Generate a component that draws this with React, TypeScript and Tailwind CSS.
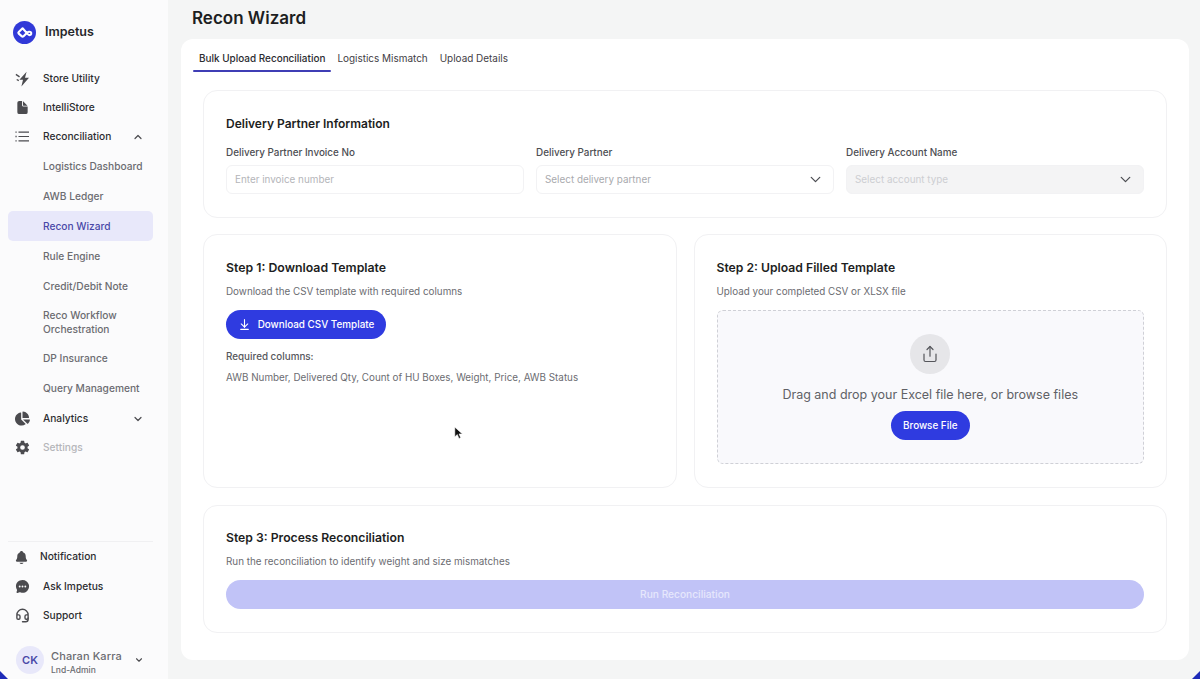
import { ArrowDownToLine, ChevronDown, ChevronUp, Headset, Share } from "lucide-react";
import { FaChartPie } from "react-icons/fa";
import { IoChatbubbleEllipses, IoDocument, IoNotifications, IoSettingsSharp } from "react-icons/io5";
import { ReactNode } from "react";

const subItems = [
  { label: "Logistics Dashboard", h: "h-[30px]" },
  { label: "AWB Ledger", h: "h-[30px]" },
  { label: "Recon Wizard", h: "h-[30px]", active: true },
  { label: "Rule Engine", h: "h-[30px]" },
  { label: "Credit/Debit Note", h: "h-[30px]" },
  { label: "Reco Workflow Orchestration", h: "h-[42px]" },
  { label: "DP Insurance", h: "h-[30px]" },
  { label: "Query Management", h: "h-[30px]" },
];

const Bolt = () => (
  <svg viewBox="0 0 20 20" className="w-[16px] h-[16px]" fill="#4b4b4f">
    <path d="M14.5 1 5.5 11h4.5L8 19.5 17.5 8.5h-5L14.5 1z" />
    <path d="M1.5 3.5l4.7 3-1 1.5-4.5-3zM2.5 10l2.6 1.4-.8 1.3-2.5-1.5z" />
  </svg>
);

const ListIcon = () => (
  <svg viewBox="0 0 16 14" className="w-[14px] h-[13px]" stroke="#4b4b4f" strokeWidth="1.2" fill="none">
    <path d="M4 2h12M4 7h12M4 12h12" />
    <path d="M.5 2h1.4M.5 7h1.4M.5 12h1.4" strokeWidth="1.6" />
  </svg>
);

const Logo = () => (
  <svg viewBox="0 0 24 24" className="w-[23px] h-[23px] shrink-0">
    <circle cx="12" cy="12" r="12" fill="#3139d8" />
    <path
      d="M10 7.6 6 11.4c-.6.6-.6 1.2 0 1.8l3 2.6c.7.6 1.4.6 2 0l3.6-3.6c1-1 3-1.4 4-.4.9 1 .4 2.6-.9 2.9-1 .2-1.7-.4-2.3-1L10 7.6z"
      fill="none"
      stroke="white"
      strokeWidth="2.2"
      strokeLinecap="round"
      strokeLinejoin="round"
    />
  </svg>
);

function NavItem({ icon, label, right, muted }: { icon: ReactNode; label: string; right?: ReactNode; muted?: boolean }) {
  return (
    <div className="flex items-center h-[29px] pl-[15px] pr-[24px]">
      <span className="w-[28px] flex items-center text-[#4b4b4f]">{icon}</span>
      <span className={`flex-1 text-[10.2px] font-medium ${muted ? "text-[#b5b6ba]" : "text-[#2b2c30]"}`}>{label}</span>
      {right}
    </div>
  );
}

function Label({ children }: { children: ReactNode }) {
  return <div className="text-[9.9px] font-medium text-[#4d4e53] mb-[6px] leading-[14px]">{children}</div>;
}

function Card({ children, className }: { children: ReactNode; className?: string }) {
  return <div className={`bg-white border border-[#f1f1f3] rounded-[14px] px-[22px] ${className ?? ""}`}>{children}</div>;
}

function Select({ placeholder, disabled }: { placeholder: string; disabled?: boolean }) {
  return (
    <div className={`h-[29px] rounded-[6px] border border-[#f2f2f4] flex items-center justify-between pl-[8px] pr-[9px] ${disabled ? "bg-[#f4f4f5]" : "bg-white"}`}>
      <span className={`text-[9.9px] ${disabled ? "text-[#cdced2]" : "text-[#a9aaae]"}`}>{placeholder}</span>
      <ChevronDown className="w-[17px] h-[17px] text-[#4d4e53]" strokeWidth={1.8} />
    </div>
  );
}

export default function App() {
  return (
    <div className="relative flex w-[1200px] h-[679px] overflow-hidden bg-[#f4f5f5] font-['Inter',sans-serif]">
      <aside className="w-[168px] h-full shrink-0 bg-[#fbfbfc] flex flex-col">
        <div className="flex items-center gap-[9px] pl-[13px] h-[64px]">
          <Logo />
          <span className="text-[12.5px] font-semibold text-[#26272b]">Impetus</span>
        </div>
        <NavItem icon={<Bolt />} label="Store Utility" />
        <NavItem icon={<IoDocument className="w-[15px] h-[15px]" />} label="IntelliStore" />
        <NavItem icon={<ListIcon />} label="Reconciliation" right={<ChevronUp className="w-[12px] h-[12px] text-[#4b4b4f]" strokeWidth={2.4} />} />
        <div className="flex flex-col mb-[1px]">
          {subItems.map((item) => (
            <div
              key={item.label}
              className={`ml-[8px] mr-[15px] pl-[35px] pr-[8px] flex items-center rounded-[5px] ${item.h} text-[10.2px] leading-[14px] font-medium ${
                item.active ? "bg-[#e8e8fa] text-[#4a48a8]" : "text-[#6b6c71]"
              }`}
            >
              {item.label}
            </div>
          ))}
        </div>
        <NavItem icon={<FaChartPie className="w-[15px] h-[15px]" />} label="Analytics" right={<ChevronDown className="w-[12px] h-[12px] text-[#4b4b4f]" strokeWidth={2.4} />} />
        <NavItem icon={<IoSettingsSharp className="w-[15px] h-[15px]" />} label="Settings" muted />
        <div className="flex-1" />
        <div className="ml-[8px] mr-[15px] border-t border-[#f0f0f2]" />
        <div className="flex items-center h-[30px] pl-[14px]">
          <span className="w-[26px] text-[#4b4b4f]"><IoNotifications className="w-[15px] h-[15px]" /></span>
          <span className="text-[10.2px] font-medium text-[#2b2c30]">Notification</span>
        </div>
        <NavItem icon={<IoChatbubbleEllipses className="w-[15px] h-[15px]" />} label="Ask Impetus" />
        <NavItem icon={<Headset className="w-[15px] h-[15px]" strokeWidth={2.2} />} label="Support" />
        <div className="flex items-center pl-[16px] pr-[24px] mt-[14px] mb-[3px] h-[32px]">
          <div className="w-[28px] h-[28px] rounded-full bg-[#e8e8fa] text-[#4a48a8] text-[11px] font-semibold flex items-center justify-center">CK</div>
          <div className="flex-1 ml-[7px] mt-[4px]">
            <div className="text-[11px] font-medium text-[#6b6c71] leading-[14px] tracking-[0.1px]">Charan Karra</div>
            <div className="text-[8.5px] font-medium text-[#6b6c71] leading-[12px] mt-[1px]">Lnd-Admin</div>
          </div>
          <ChevronDown className="w-[10px] h-[10px] text-[#4b4b4f]" strokeWidth={2.6} />
        </div>
      </aside>

      <main className="flex-1 flex flex-col pl-[13px] pr-[11px]">
        <h1 className="h-[39px] pl-[11px] pt-[6px] text-[17px] leading-[24px] font-semibold text-[#1d1e22]">Recon Wizard</h1>
        <div className="h-[621px] bg-white rounded-[12px] px-[22px]">
          <div className="flex h-[34px] -ml-[10px] text-[9.95px]">
            <div className="relative h-[33px] pt-[6px] flex items-center px-[6px] font-medium text-[#2b2c30]">
              Bulk Upload Reconciliation
              <span className="absolute left-0 right-0 bottom-0 h-[2px] rounded-full bg-[#3f3db5]" />
            </div>
            <div className="h-[33px] pt-[6px] flex items-center pl-[6px] text-[#3f4045]">Logistics Mismatch</div>
            <div className="h-[33px] pt-[6px] flex items-center pl-[12px] text-[#3f4045]">Upload Details</div>
          </div>

          <Card className="mt-[17px] h-[128px] pt-[25px]">
            <h2 className="text-[12px] leading-[16px] font-semibold text-[#1d1e22] mb-[13px]">Delivery Partner Information</h2>
            <div className="grid grid-cols-3 gap-[12px]">
              <div>
                <Label>Delivery Partner Invoice No</Label>
                <div className="h-[29px] rounded-[6px] border border-[#f2f2f4] flex items-center pl-[8px] text-[9.9px] text-[#b4b5b9]">Enter invoice number</div>
              </div>
              <div>
                <Label>Delivery Partner</Label>
                <Select placeholder="Select delivery partner" />
              </div>
              <div>
                <Label>Delivery Account Name</Label>
                <Select placeholder="Select account type" disabled />
              </div>
            </div>
          </Card>

          <div className="grid grid-cols-2 gap-[17px] mt-[16px]">
            <Card className="h-[254px] pt-[25px]">
              <h2 className="text-[12.3px] leading-[16px] font-semibold text-[#1d1e22]">Step 1: Download Template</h2>
              <p className="text-[9.85px] leading-[14px] text-[#6b6c71] mt-[8px]">Download the CSV template with required columns</p>
              <button className="mt-[12px] h-[29px] w-[160px] rounded-full bg-[#2f3be0] flex items-center justify-center gap-[7px] text-white text-[9.9px] font-medium">
                <ArrowDownToLine className="w-[13px] h-[13px]" strokeWidth={2} />
                Download CSV Template
              </button>
              <div className="text-[9.85px] leading-[14px] font-medium text-[#56575c] mt-[10px]">Required columns:</div>
              <p className="text-[9.85px] leading-[14px] text-[#6b6c71] mt-[7px]">AWB Number, Delivered Qty, Count of HU Boxes, Weight, Price, AWB Status</p>
            </Card>
            <Card className="h-[254px] pt-[25px]">
              <h2 className="text-[12.2px] leading-[16px] font-semibold text-[#1d1e22]">Step 2: Upload Filled Template</h2>
              <p className="text-[9.85px] leading-[14px] text-[#6b6c71] mt-[8px]">Upload your completed CSV or XLSX file</p>
              <div className="mt-[12px] h-[154px] rounded-[6px] border border-dashed border-[#cfd0d6] bg-[#f9f9fc] flex flex-col items-center pt-[23px]">
                <div className="w-[40px] h-[40px] rounded-full bg-[#e6e6e9] flex items-center justify-center">
                  <Share className="w-[18px] h-[18px] text-[#55565b]" strokeWidth={1.6} />
                </div>
                <p className="text-[12.5px] leading-[18px] text-[#606166] mt-[12px]">Drag and drop your Excel file here, or browse files</p>
                <button className="mt-[7px] h-[29px] w-[79px] rounded-full bg-[#2f3be0] text-white text-[9.9px] font-medium">Browse File</button>
              </div>
            </Card>
          </div>

          <Card className="mt-[17px] h-[128px] pt-[24px]">
            <h2 className="text-[12.2px] leading-[16px] font-semibold text-[#1d1e22]">Step 3: Process Reconciliation</h2>
            <p className="text-[9.85px] leading-[14px] text-[#6b6c71] mt-[8px]">Run the reconciliation to identify weight and size mismatches</p>
            <button className="mt-[12px] w-full h-[29px] rounded-full bg-[#c1c3f7] text-[#e6e7fc] text-[10.2px] font-medium">Run Reconciliation</button>
          </Card>
        </div>
      </main>

      <svg viewBox="0 0 12 16" className="absolute left-[454px] top-[426px] w-[10px] h-[14px]">
        <path d="M1 1v11.5l3-2.7 2 4.7 2-.9-2-4.5h4z" fill="#111" stroke="#fff" strokeWidth="0.6" />
      </svg>
      <svg viewBox="0 0 8 8" className="absolute left-0 bottom-0 w-[8px] h-[8px]">
        <path d="M0 0 8 8H0z" fill="#1e2bb8" />
      </svg>
      <svg viewBox="0 0 8 8" className="absolute right-0 bottom-0 w-[8px] h-[8px]">
        <path d="M8 0v8H0z" fill="#1e2bb8" />
      </svg>
    </div>
  );
}
